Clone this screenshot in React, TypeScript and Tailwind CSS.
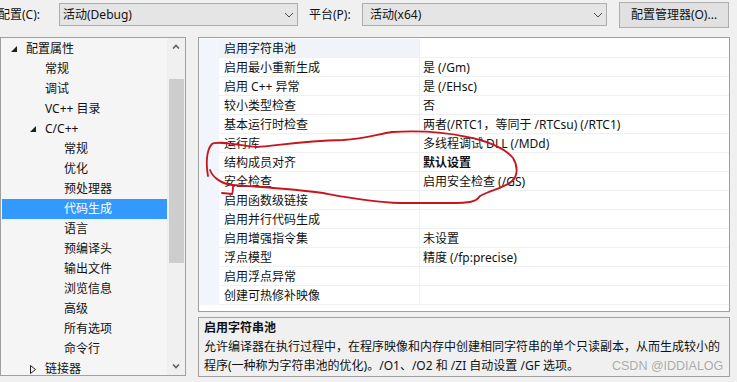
import React from "react";

const font = { fontFamily: '"Noto Sans", "Noto Sans CJK SC", sans-serif' };

type TreeItem = { label: string; level: 0 | 1 | 2; arrow?: "down" | "right"; selected?: boolean };

const tree: TreeItem[] = [
  { label: "配置属性", level: 0, arrow: "down" },
  { label: "常规", level: 1 },
  { label: "调试", level: 1 },
  { label: "VC++ 目录", level: 1 },
  { label: "C/C++", level: 1, arrow: "down" },
  { label: "常规", level: 2 },
  { label: "优化", level: 2 },
  { label: "预处理器", level: 2 },
  { label: "代码生成", level: 2, selected: true },
  { label: "语言", level: 2 },
  { label: "预编译头", level: 2 },
  { label: "输出文件", level: 2 },
  { label: "浏览信息", level: 2 },
  { label: "高级", level: 2 },
  { label: "所有选项", level: 2 },
  { label: "命令行", level: 2 },
  { label: "链接器", level: 1, arrow: "right" },
];

const props: { name: string; value: string; bold?: boolean }[] = [
  { name: "启用字符串池", value: "" },
  { name: "启用最小重新生成", value: "是 (/Gm)" },
  { name: "启用 C++ 异常", value: "是 (/EHsc)" },
  { name: "较小类型检查", value: "否" },
  { name: "基本运行时检查", value: "两者(/RTC1，等同于 /RTCsu) (/RTC1)" },
  { name: "运行库", value: "多线程调试 DLL (/MDd)" },
  { name: "结构成员对齐", value: "默认设置", bold: true },
  { name: "安全检查", value: "启用安全检查 (/GS)" },
  { name: "启用函数级链接", value: "" },
  { name: "启用并行代码生成", value: "" },
  { name: "启用增强指令集", value: "未设置" },
  { name: "浮点模型", value: "精度 (/fp:precise)" },
  { name: "启用浮点异常", value: "" },
  { name: "创建可热修补映像", value: "" },
];

function Chevron() {
  return (
    <svg width="10" height="6" viewBox="0 0 10 6" className="shrink-0">
      <polyline points="1,1 5,5 9,1" fill="none" stroke="#4a4a4a" strokeWidth="1" />
    </svg>
  );
}

function TreeArrow({ kind }: { kind: "down" | "right" }) {
  if (kind === "down") {
    return (
      <svg width="6" height="6" viewBox="0 0 6 6">
        <polygon points="6,0 6,6 0,6" fill="#1e1e1e" />
      </svg>
    );
  }
  return (
    <svg width="6" height="9" viewBox="0 0 6 9">
      <polygon points="0.5,0.5 5.5,4.5 0.5,8.5" fill="none" stroke="#1e1e1e" strokeWidth="1" />
    </svg>
  );
}

export default function App() {
  return (
    <div
      className="relative w-[737px] h-[382px] overflow-hidden bg-[#f0f0f0] text-[12px] text-[#111]"
      style={font}
    >
      {/* Top row */}
      <div className="flex h-[37px] items-start pt-[3px]">
        <div className="ml-[-2px] w-[61px] h-[23px] leading-[23px] whitespace-nowrap">配置(C):</div>
        <div className="flex h-[23px] w-[239px] items-center justify-between border border-[#adadad] bg-[#e5e5e5] pl-[3px] pr-[3px]">
          <span className="leading-[20px]">活动(Debug)</span>
          <Chevron />
        </div>
        <div className="ml-[11px] w-[53px] h-[23px] leading-[23px] whitespace-nowrap">平台(P):</div>
        <div className="flex h-[23px] w-[245px] items-center justify-between border border-[#adadad] bg-[#e5e5e5] pl-[7px] pr-[3px]">
          <span className="leading-[20px]">活动(x64)</span>
          <Chevron />
        </div>
        <div className="ml-[12px] mt-[-1px] flex h-[26px] w-[110px] items-center justify-center border border-[#adadad] bg-[#e1e1e1]">
          配置管理器(O)...
        </div>
      </div>

      {/* Main area */}
      <div className="flex items-start">
        {/* Tree */}
        <div className="flex h-[339px] w-[186px] border border-[#a0a0a0] bg-[#f5f5f5]">
          <div className="ml-[1px] w-[165px] pt-[1px]">
            {tree.map((t, i) => (
              <div
                key={i}
                className={
                  "flex h-[20px] items-center whitespace-nowrap " +
                  (t.selected ? "bg-[#3399ff] text-white " : "") +
                  (t.level === 0 ? "pl-[9px]" : t.level === 1 ? (t.arrow ? "pl-[28px]" : "pl-[43px]") : "pl-[62px]")
                }
              >
                {t.arrow && (
                  <span className="flex w-[15px] items-center">
                    <TreeArrow kind={t.arrow} />
                  </span>
                )}
                <span className="leading-[20px]">{t.label}</span>
              </div>
            ))}
          </div>
          {/* Scrollbar */}
          <div className="flex w-[18px] flex-col items-center bg-[#f0f0f0]">
            <div className="flex h-[17px] w-full items-center justify-center">
              <svg width="8" height="5" viewBox="0 0 8 5">
                <polyline points="1,4.5 4,1.5 7,4.5" fill="none" stroke="#606060" strokeWidth="1.6" />
              </svg>
            </div>
            <div className="mt-[24px] h-[184px] w-[15px] bg-[#cdcdcd]" />
            <div className="flex-1" />
            <div className="flex h-[17px] w-full items-center justify-center">
              <svg width="8" height="5" viewBox="0 0 8 5">
                <polyline points="1,0.5 4,3.5 7,0.5" fill="none" stroke="#606060" strokeWidth="1.6" />
              </svg>
            </div>
          </div>
        </div>

        {/* Right column */}
        <div className="ml-[12px] flex w-[532px] flex-col">
          <div className="h-[275px] overflow-hidden border border-[#a0a0a0] bg-white pt-[1px]">
            {props.map((p, i) => (
              <div key={i} className="flex h-[19px]">
                <div className="w-[20px] bg-[#f2f5fb]" />
                <div
                  className={
                    "w-[201px] border-b border-r border-[#eef0f3] pl-[5px] leading-[19px] whitespace-nowrap " +
                    (i === 0 ? "bg-[#f0f3f8]" : "")
                  }
                >
                  {p.name}
                </div>
                <div
                  className={
                    "flex-1 border-b border-[#eef0f3] pl-[3px] leading-[19px] whitespace-nowrap " +
                    (p.bold ? "font-bold" : "")
                  }
                >
                  {p.value}
                </div>
              </div>
            ))}
          </div>

          <div className="mt-[5px] h-[60px] border border-[#a0a0a0] bg-[#f0f0f0] pl-[5px]">
            <div className="font-bold leading-[19px]">启用字符串池</div>
            <div className="leading-[19px] whitespace-nowrap">
              允许编译器在执行过程中，在程序映像和内存中创建相同字符串的单个只读副本，从而生成较小的
            </div>
            <div className="leading-[19px] whitespace-nowrap">
              程序(一种称为字符串池的优化)。/O1、/O2 和 /ZI 自动设置 /GF 选项。
            </div>
          </div>
        </div>
      </div>

      {/* Watermark */}
      <div
        className="pointer-events-none absolute left-[612px] top-[357px] text-[12.5px] leading-[18px] text-[#a9a9a9] whitespace-nowrap"
        style={{ fontFamily: '"Liberation Sans", Arial, sans-serif', textShadow: "0 0 1px #fff" }}
      >
        CSDN @IDDIALOG
      </div>

      {/* Red annotation */}
      <svg className="pointer-events-none absolute left-0 top-0" width="737" height="382" viewBox="0 0 737 382">
        <path
          d="M 208 176 C 206 165, 206 150, 212 144 C 218 140, 240 146, 257 147 C 275 146, 300 141, 343 140 C 365 139, 378 134, 392 132 C 410 131, 440 131, 467 137 C 485 140, 505 148, 513 158 C 518 166, 518 176, 512 181 C 505 188, 490 190, 480 196 C 476 202, 470 203, 450 203 L 400 203 C 370 202, 345 197, 323 193 C 295 189, 260 187, 233 185 C 222 184, 213 178, 210 170"
          fill="none"
          stroke="#c8151d"
          strokeWidth="1.8"
          strokeLinecap="round"
        />
        <path d="M 233 185 C 233 189, 233 192, 232 194 L 222 193" fill="none" stroke="#c8151d" strokeWidth="1.8" strokeLinecap="round" />
      </svg>
    </div>
  );
}
